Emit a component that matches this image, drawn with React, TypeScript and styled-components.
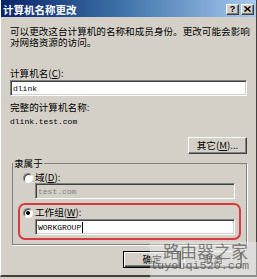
import React from "react";
import styled, { createGlobalStyle } from "styled-components";

const GlobalStyle = createGlobalStyle`
  html, body { margin: 0; padding: 0; background: #d4d0c8; }
  body { font-family: "Noto Sans CJK SC", "Noto Sans", sans-serif; color: #000; }
  * { box-sizing: border-box; }
`;

const Root = styled.div`
  position: relative;
  width: 257px;
  height: 279px;
  overflow: hidden;
  background: #d4d0c8;
`;

const Dialog = styled.div`
  height: 277px;
  display: flex;
  flex-direction: column;
  background: #d4d0c8;
  border-left: 1px solid #ffffff;
  border-right: 1px solid #404040;
  border-bottom: 2px solid #404040;
`;

const TitleBar = styled.div`
  height: 17px;
  display: flex;
  align-items: center;
  padding: 0 2px 0 2px;
  background: linear-gradient(to right, #0a246a 0%, #3a6ea5 45%, #a6caf0 100%);
`;

const TitleText = styled.div`
  flex: 1;
  color: #ffffff;
  font-weight: bold;
  font-size: 10.5px;
  line-height: 11px;
  padding-top: 2px;
  white-space: nowrap;
`;

const TitleButtons = styled.div`
  display: flex;
  gap: 2px;
  margin-top: 1px;
`;

const TitleButton = styled.div`
  width: 13px;
  height: 11px;
  display: flex;
  align-items: center;
  justify-content: center;
  background: #d4d0c8;
  border: 1px solid;
  border-color: #ffffff #404040 #404040 #ffffff;
  box-shadow: inset -1px -1px 0 #808080;
  font-family: "Liberation Sans", sans-serif;
  font-weight: bold;
  font-size: 9px;
  line-height: 9px;
  color: #000;
`;

const Content = styled.div`
  display: flex;
  flex-direction: column;
  padding: 9px 9px 0 9px;
`;

const Text = styled.div<{ $mt?: number }>`
  font-size: 9.6px;
  line-height: 11px;
  white-space: nowrap;
  margin-top: ${(p) => p.$mt ?? 0}px;
`;

const MonoText = styled.div<{ $mt?: number }>`
  font-family: "Liberation Mono", monospace;
  font-size: 8px;
  line-height: 11px;
  white-space: nowrap;
  margin-top: ${(p) => p.$mt ?? 0}px;
`;

const Field = styled.div<{ $disabled?: boolean; $mt?: number; $ml?: number; $mr?: number }>`
  height: 16px;
  display: flex;
  align-items: center;
  padding-left: 2px;
  margin: ${(p) => p.$mt ?? 0}px ${(p) => p.$mr ?? 0}px 0 ${(p) => p.$ml ?? 0}px;
  background: ${(p) => (p.$disabled ? "#d4d0c8" : "#ffffff")};
  color: ${(p) => (p.$disabled ? "#808080" : "#000000")};
  border: 1px solid;
  border-color: #808080 #ffffff #ffffff #808080;
  box-shadow: inset 1px 1px 0 #404040, inset -1px -1px 0 #d4d0c8;
  font-family: "Liberation Mono", monospace;
  font-size: 8px;
  line-height: 11px;
  white-space: nowrap;
`;

const Caret = styled.span`
  display: inline-block;
  width: 1px;
  height: 11px;
  background: #000;
  margin-left: 1px;
`;

const ButtonRow = styled.div<{ $mt: number; $pr?: number }>`
  display: flex;
  justify-content: flex-end;
  gap: 3px;
  margin-top: ${(p) => p.$mt}px;
  padding-right: ${(p) => p.$pr ?? 0}px;
`;

const Button = styled.div<{ $w: number; $default?: boolean }>`
  width: ${(p) => p.$w}px;
  height: 17px;
  display: flex;
  align-items: center;
  justify-content: center;
  background: #d4d0c8;
  border: 1px solid;
  border-color: ${(p) =>
    p.$default ? "#000000" : "#ffffff #404040 #404040 #ffffff"};
  box-shadow: ${(p) =>
    p.$default
      ? "inset 1px 1px 0 #ffffff, inset -1px -1px 0 #404040, inset -2px -2px 0 #808080"
      : "inset -1px -1px 0 #808080"};
  font-size: 9.6px;
  line-height: 11px;
  white-space: nowrap;
`;

const Group = styled.fieldset`
  margin: 4px 0 0 2px;
  padding: 0 0 4px 0;
  border: 1px solid #808080;
  box-shadow: 1px 1px 0 #ffffff;
  min-width: 0;
`;

const Legend = styled.legend`
  padding: 0 1px;
  margin-left: 0;
  font-size: 9.6px;
  line-height: 11px;
  white-space: nowrap;
`;

const RadioRow = styled.div<{ $mt?: number; $pl: number }>`
  display: flex;
  align-items: center;
  gap: 2px;
  margin-top: ${(p) => p.$mt ?? 0}px;
  padding-left: ${(p) => p.$pl}px;
  font-size: 9.6px;
  line-height: 11px;
  white-space: nowrap;
`;

const Radio = styled.span<{ $checked?: boolean }>`
  width: 10px;
  height: 10px;
  border-radius: 50%;
  background: #ffffff;
  border: 1px solid;
  border-color: #808080 #ffffff #ffffff #808080;
  box-shadow: inset 1px 1px 0 #404040;
  display: flex;
  align-items: center;
  justify-content: center;
  &::after {
    content: "";
    width: 4px;
    height: 4px;
    border-radius: 50%;
    background: ${(p) => (p.$checked ? "#000" : "transparent")};
  }
`;

const Highlight = styled.div`
  margin: 4px 5px 0 5px;
  padding: 2px 0 3px 3px;
  border: 2px solid #d83a40;
  border-radius: 7px;
  display: flex;
  flex-direction: column;
`;

const Watermark = styled.div`
  position: absolute;
  right: 0;
  bottom: 0;
  width: 107px;
  height: 37px;
  background: rgba(236, 236, 236, 0.45);
  display: flex;
  flex-direction: column;
`;

const WatermarkCn = styled.div`
  font-size: 17px;
  line-height: 17px;
  color: rgba(95, 95, 95, 0.8);
  padding-left: 13px;
  white-space: nowrap;
`;

const WatermarkEn = styled.div`
  font-family: "Liberation Mono", monospace;
  font-size: 11.8px;
  line-height: 13px;
  color: rgba(80, 80, 80, 0.8);
  margin-top: 1px;
  white-space: nowrap;
`;

export default function App() {
  return (
    <Root>
      <GlobalStyle />
      <Dialog>
        <TitleBar>
          <TitleText>计算机名称更改</TitleText>
          <TitleButtons>
            <TitleButton>?</TitleButton>
            <TitleButton>
              <svg width="7" height="6" viewBox="0 0 7 6">
                <path d="M0.5 0.5 L6.5 5.5 M6.5 0.5 L0.5 5.5" stroke="#000" strokeWidth="1.5" />
              </svg>
            </TitleButton>
          </TitleButtons>
        </TitleBar>
        <Content>
          <Text>
            可以更改这台计算机的名称和成员身份。更改可能会影响
            <br />
            对网络资源的访问。
          </Text>
          <Text $mt={20}>
            计算机名(<u>C</u>):
          </Text>
          <Field $mt={1}>dlink</Field>
          <Text $mt={6}>完整的计算机名称:</Text>
          <MonoText $mt={3}>dlink.test.com</MonoText>
          <ButtonRow $mt={10}>
            <Button $w={59}>
              其它(<u>M</u>)...
            </Button>
          </ButtonRow>
          <Group>
            <Legend>隶属于</Legend>
            <RadioRow $mt={3} $pl={10}>
              <Radio />
              <span>
                域(<u>D</u>):
              </span>
            </RadioRow>
            <Field $disabled $ml={22} $mr={11}>
              test.com
            </Field>
            <Highlight>
              <RadioRow $pl={0}>
                <Radio $checked />
                <span>
                  工作组(<u>W</u>):
                </span>
              </RadioRow>
              <Field $mt={1} $ml={12} $mr={4}>
                WORKGROUP
                <Caret />
              </Field>
            </Highlight>
          </Group>
          <ButtonRow $mt={6} $pr={5}>
            <Button $w={58} $default>
              确定
            </Button>
            <Button $w={58}>取消</Button>
          </ButtonRow>
        </Content>
      </Dialog>
      <Watermark>
        <WatermarkCn>路由器之家</WatermarkCn>
        <WatermarkEn>luyouqi520.com</WatermarkEn>
      </Watermark>
    </Root>
  );
}
